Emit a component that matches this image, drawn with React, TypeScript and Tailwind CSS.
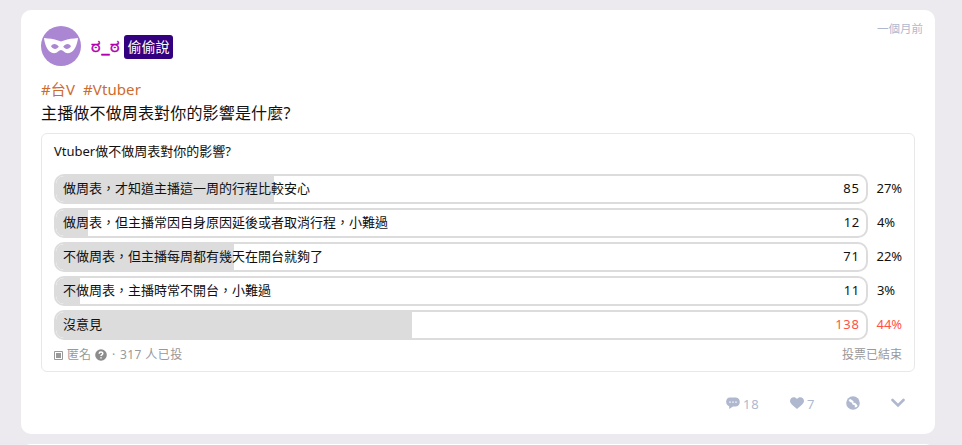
const options = [
  { text: '做周表，才知道主播這一周的行程比較安心', votes: 85, percent: 27 },
  { text: '做周表，但主播常因自身原因延後或者取消行程，小難過', votes: 12, percent: 4 },
  { text: '不做周表，但主播每周都有幾天在開台就夠了', votes: 71, percent: 22 },
  { text: '不做周表，主播時常不開台，小難過', votes: 11, percent: 3 },
  { text: '沒意見', votes: 138, percent: 44 },
];

function MaskAvatar() {
  return (
    <svg className="size-10 shrink-0" viewBox="0 0 40 40">
      <circle cx="20" cy="20" r="20" fill="#ab87d3" />
      <path
        fill="#fff"
        fillRule="evenodd"
        d="M3 12C8 12.800 13 12.600 17 14.600Q20 16.200 23 14.600C27 12.600 32 12.800 37 12C36.200 19 33 27.200 27 27.200C23.500 27.200 22 24 20 24S16.500 27.200 13 27.200C7 27.200 3.800 19 3 12ZM10 20.300C12.500 24 16 23.300 17.800 20.800C15.500 17.500 12 17 10 20.300ZM30 20.300C28 17 24.500 17.500 22.200 20.800C24 23.300 27.500 24 30 20.300Z"
      />
    </svg>
  );
}

function PollOption({ text, votes, percent }: { text: string; votes: number; percent: number }) {
  const leading = percent === 44;
  return (
    <li className="flex h-[30px] items-center text-[13px]">
      <div className="relative flex h-[30px] w-[814px] items-center justify-between overflow-hidden rounded-[10px] border-2 border-[#dcdcdc] pr-[6px] pb-[2px] pl-[7px]">
        <div className="absolute inset-y-0 left-0 rounded-l-[8px] bg-[#dcdcdc]" style={{ width: `${Math.floor(8.1 * percent)}px` }} />
        <span className="relative leading-5">{text}</span>
        <span className={`relative leading-5 tracking-[0.7px] ${leading ? 'text-[#ff5247]' : ''}`}>{votes}</span>
      </div>
      <span className={`ml-[9px] pb-[2px] leading-5 tracking-[-0.1px] ${leading ? 'text-[#ff5247]' : ''}`}>{percent}%</span>
    </li>
  );
}

export default function App() {
  return (
    <div className="flex h-[445px] w-[962px] flex-col gap-[10px] overflow-hidden bg-[#eceaef] pt-[10px] pl-[21px] font-['Noto_Sans','Noto_Sans_CJK_TC',sans-serif] text-[#111]">
      <article className="flex h-[424px] w-[914px] shrink-0 flex-col rounded-[10px] bg-white pl-5">
        <header className="flex h-[66px] items-start pr-3">
          <div className="mt-4 flex items-center">
            <MaskAvatar />
            <span className="mb-[2px] ml-[10px] w-[33px] whitespace-nowrap text-[18px] leading-6 tracking-[0.6px] text-[#b000b0] [-webkit-text-stroke:0.6px_#b000b0]">ಠ_ಠ</span>
            <span className="mt-[2px] h-6 w-[49px] rounded-[3px] bg-[#330080] text-center text-[14px] leading-6 text-white">偷偷說</span>
          </div>
          <time className="mt-[9px] ml-auto text-[11.5px] leading-5 text-[#afb8cf]">一個月前</time>
        </header>
        <p className="mt-px h-6 whitespace-pre text-[15px] leading-6 tracking-[0.1px] text-[#ce6b2d]">#台V  #Vtuber</p>
        <p className="h-6 text-[16px] leading-6 tracking-[0.16px]">主播做不做周表對你的影響是什麼?</p>
        <section className="mt-[8px] flex h-[239px] w-[874px] flex-col rounded-[6px] border border-[#e8e8e8] px-3">
          <h2 className="mt-[7px] h-5 text-[13px] leading-5">Vtuber做不做周表對你的影響?</h2>
          <ul className="mt-[13px] flex flex-col gap-1">
            {options.map((o) => <PollOption key={o.text} {...o} />)}
          </ul>
          <footer className="mt-[5px] flex h-5 items-center text-[12px] leading-5 text-[#999]">
            <svg className="size-[9px]" viewBox="0 0 9 9"><path fill="none" stroke="currentColor" d="M.5.500h8v8h-8z" /><path fill="currentColor" d="M2 2h5v5H2z" /></svg>
            <span className="ml-1">匿名</span>
            <svg className="ml-1 size-3" viewBox="0 0 12 12">
              <circle cx="6" cy="6" r="5.800" fill="#8c8c8c" />
              <path d="M4.200 4.700C4.200 2.500 7.800 2.500 7.800 4.600C7.800 5.900 6 5.700 6 7M6 8.200v1.300" fill="none" stroke="#fff" strokeWidth="1.500" />
            </svg>
            <span className="ml-[5px] w-[8px]">·</span>
            <span className="whitespace-pre tracking-[0.4px]">317 人已投</span>
            <span className="ml-auto">投票已結束</span>
          </footer>
        </section>
        <div className="mt-[19px] flex h-6 items-center pl-[684px] text-[13px] text-[#afb8cf]">
          <div className="flex w-[65px] items-center gap-[4px]">
            <svg className="ml-px size-[14px]" viewBox="0 0 14 14">
              <path fill="currentColor" d="M4 1.500h6C15 1.500 15 10.500 10 10.500H7L3.200 13V10.300C-1 9.500 -1 1.500 4 1.500Z" />
              <path fill="#fff" d="M3.300 5.500h1.400v1.200H3.300zM6.300 5.500h1.400v1.200H6.300zM9.300 5.500h1.400v1.200H9.300z" />
            </svg>
            <span className="mt-[2px] -ml-px leading-5 tracking-[0.7px]">18</span>
          </div>
          <div className="flex w-[56px] items-center gap-[3px]">
            <svg className="size-[14px]" viewBox="0 0 14 14"><path fill="currentColor" d="M7 3C5 0 0 1 0 5c0 3 4 5 7 8c3-3 7-5 7-8C14 1 9 0 7 3Z" /></svg>
            <span className="mt-[2px] leading-5">7</span>
          </div>
          <svg className="size-[14px]" viewBox="0 0 14 14">
            <circle cx="7" cy="7" r="6.800" fill="currentColor" />
            <path fill="#fff" d="M2.500 4L4.500 3L7.500 5.300V7L9 6.700L11.500 9.200L11 11L8.800 11.500V9.300L6.500 8.500L6 6.700L4 6Z" />
          </svg>
          <svg className="ml-[31px] h-[10px] w-[14px]" viewBox="0 0 14 10"><path d="M1.500 2L7 7.500L12.500 2" fill="none" stroke="currentColor" strokeWidth="2.600" strokeLinecap="round" /></svg>
        </div>
      </article>
      <article className="h-5 w-[914px] shrink-0 rounded-[10px] bg-white" />
    </div>
  );
}
